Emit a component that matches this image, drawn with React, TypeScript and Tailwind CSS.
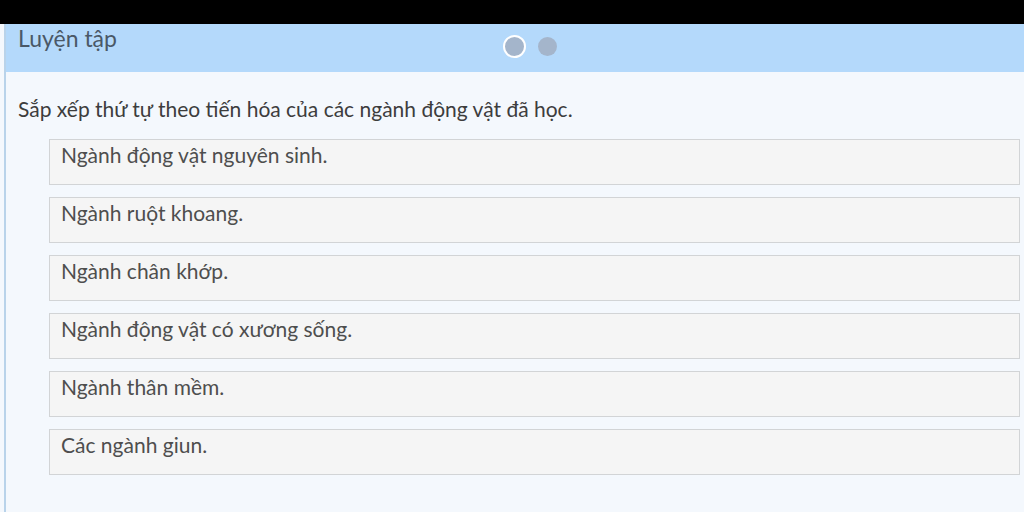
export default function App() {
  const items = [
    "Ngành động vật nguyên sinh.",
    "Ngành ruột khoang.",
    "Ngành chân khớp.",
    "Ngành động vật có xương sống.",
    "Ngành thân mềm.",
    "Các ngành giun.",
  ];

  return (
    <div className="w-[1024px] h-[512px] overflow-hidden bg-[#f4f8fd] flex flex-col" style={{ fontFamily: "Lato, 'Open Sans', sans-serif" }}>
      <div className="h-[24px] bg-black shrink-0" />
      <div className="flex-1 ml-[4px] border-l-[2px] border-[#b9d3ea] flex flex-col">
        <div className="h-[48px] bg-[#b4d9fb] relative shrink-0">
          <div className="pl-[12px] -mt-[3px] text-[23px] text-[#4a5867]">Luyện tập</div>
          <div className="absolute left-[497px] top-[11px] flex items-center gap-[12px]">
            <span className="w-[23px] h-[23px] rounded-full bg-[#a4b5cb] border-[2px] border-white" />
            <span className="w-[19px] h-[19px] rounded-full bg-[#a4b5cb]" />
          </div>
        </div>
        <div className="pt-[23px] pl-[12px] text-[21px] leading-[28px] text-[#3d3d3d]">
          Sắp xếp thứ tự theo tiến hóa của các ngành động vật đã học.
        </div>
        <div className="mt-[16px] ml-[43px] mr-[4px] flex flex-col gap-[12px]">
          {items.map((t) => (
            <div key={t} className="h-[46px] border-[1.5px] border-[#d2d4d6] bg-[#f5f5f5] pl-[11px] text-[21px] leading-[30px] text-[#4e4e4e]">
              {t}
            </div>
          ))}
        </div>
      </div>
    </div>
  );
}
